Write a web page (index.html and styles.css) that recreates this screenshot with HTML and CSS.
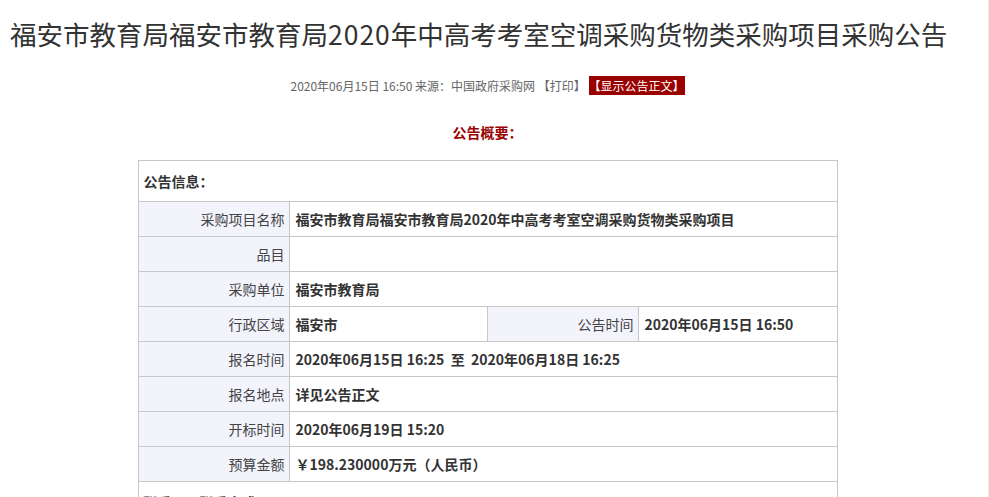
FILE: index.html
```html
<!DOCTYPE html>
<html lang="zh-CN">
<head>
<meta charset="utf-8">
<title>福安市教育局2020年中高考考室空调采购货物类采购项目采购公告</title>
<link rel="stylesheet" href="styles.css">
</head>
<body>
<div class="content">
  <h1 class="title">福安市教育局福安市教育局<span class="num">2020</span>年中高考考室空调采购货物类采购项目采购公告</h1>
  <p class="meta">2020年06月15日 16:50 来源：中国政府采购网 <span class="print">【打印】</span> <span class="show">【显示公告正文】</span></p>
  <h2 class="summary">公告概要：</h2>
  <table class="info">
    <colgroup>
      <col class="c1"><col class="c2"><col class="c3"><col class="c4">
    </colgroup>
    <tr><td class="head" colspan="4">公告信息：</td></tr>
    <tr><td class="lbl">采购项目名称</td><td class="val" colspan="3">福安市教育局福安市教育局2020年中高考考室空调采购货物类采购项目</td></tr>
    <tr><td class="lbl">品目</td><td class="val" colspan="3"></td></tr>
    <tr><td class="lbl">采购单位</td><td class="val" colspan="3">福安市教育局</td></tr>
    <tr><td class="lbl">行政区域</td><td class="val">福安市</td><td class="lbl">公告时间</td><td class="val">2020年06月15日 16:50</td></tr>
    <tr><td class="lbl">报名时间</td><td class="val" colspan="3">2020年06月15日 16:25&nbsp; 至&nbsp; 2020年06月18日 16:25</td></tr>
    <tr><td class="lbl">报名地点</td><td class="val" colspan="3">详见公告正文</td></tr>
    <tr><td class="lbl">开标时间</td><td class="val" colspan="3">2020年06月19日 15:20</td></tr>
    <tr><td class="lbl">预算金额</td><td class="val" colspan="3">￥198.230000万元（人民币）</td></tr>
    <tr><td class="head" colspan="4">联系人及联系方式：</td></tr>
  </table>
</div>
</body>
</html>
```

FILE: styles.css
```css
html, body {
  margin: 0;
  padding: 0;
  background: #fff;
}
body {
  border-right: 1px solid #ececec;
  height: 497px;
  overflow: hidden;
  font-family: "Noto Sans CJK SC", "Noto Sans", sans-serif;
  color: #333;
}
.content {
  width: 975px;
}
.title {
  margin: 0;
  padding: 17px 0 0 10px;
  font-size: 26.5px;
  line-height: 34px;
  font-weight: normal;
  color: #333;
  white-space: nowrap;
}
.title .num {
  letter-spacing: 1px;
}
.meta {
  margin: 0;
  padding-top: 27px;
  text-align: center;
  font-size: 12px;
  line-height: 16px;
  color: #666;
}
.meta .show {
  background: #990000;
  color: #fff;
  padding: 1px 0;
}
.summary {
  margin: 0;
  padding-top: 28px;
  text-align: center;
  font-size: 14px;
  line-height: 20px;
  color: #990000;
  font-weight: bold;
}
.info {
  margin: 18px auto 0;
  width: 700px;
  border-collapse: collapse;
  table-layout: fixed;
  font-size: 14px;
}
.c1, .c3 { width: 151px; }
.c2 { width: 198px; }
.info td {
  border: 1px solid #c8c8c8;
  height: 34px;
  padding: 0;
  line-height: 20px;
}
.info td.head {
  height: 40px;
  padding-left: 5px;
  font-weight: bold;
  color: #333;
}
.info td.lbl {
  background: #f3f3fc;
  text-align: right;
  padding-right: 4px;
  color: #444;
}
.info td.val {
  padding-left: 6px;
  font-weight: bold;
  color: #333;
}
```
